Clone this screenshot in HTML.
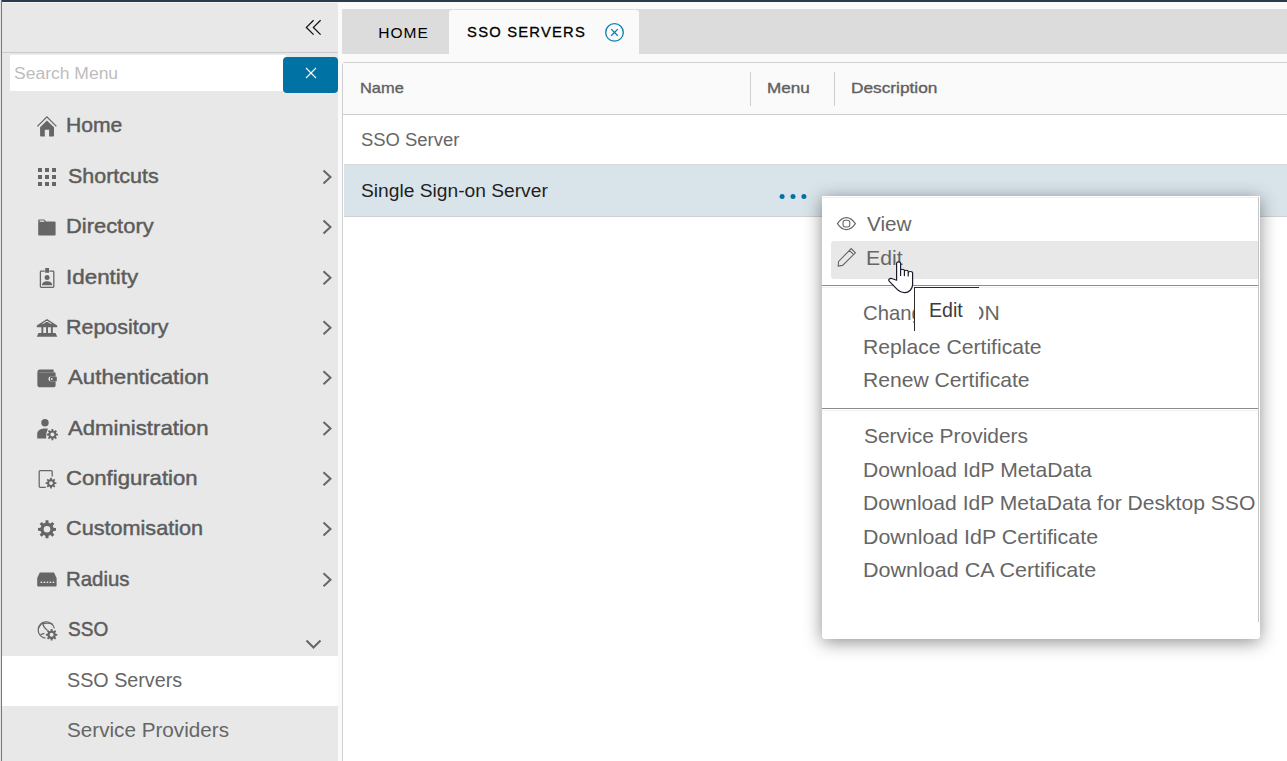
<!DOCTYPE html>
<html><head><meta charset="utf-8">
<style>
html,body{margin:0;padding:0;width:1287px;height:761px;overflow:hidden;background:#fafafa;font-family:"Liberation Sans", sans-serif;}
.a{position:absolute;box-sizing:border-box;}
.t{position:absolute;white-space:nowrap;line-height:20px;transform-origin:0 0;font-family:"Liberation Sans", sans-serif;z-index:5;}
svg{position:absolute;overflow:visible;}
</style></head><body>
<!-- top dark bar -->
<div class="a" style="left:2px;top:0;width:1285px;height:2px;background:#2a3b4b;z-index:9"></div>
<div class="a" style="left:0;top:0;width:1px;height:761px;background:#e3e3e3;z-index:9"></div>
<div class="a" style="left:1px;top:0;width:1px;height:761px;background:#787878;z-index:9"></div>
<!-- sidebar -->
<div class="a" style="left:0;top:0;width:338px;height:761px;background:#e8e8e8"></div>
<div class="a" style="left:1px;top:2px;width:1px;height:759px;background:#787878"></div>
<div class="a" style="left:2px;top:2px;width:336px;height:1px;background:#f4f4f4"></div>
<div class="a" style="left:2px;top:52px;width:336px;height:1px;background:#c9c9c9"></div>
<div class="a" style="left:10px;top:55px;width:276px;height:36px;background:#fff"></div>
<div class="a" style="left:283px;top:57px;width:55px;height:36px;background:#0072a3;border-radius:4px"></div>
<svg style="left:0;top:0" width="1" height="1"><path d="M306 68 L316 78 M316 68 L306 78" stroke="#fff" stroke-width="1.1" fill="none"/></svg>
<!-- collapse double chevron -->
<svg style="left:0;top:0" width="1" height="1"><path d="M313.6 20.2 L306.4 27.4 L313.6 34.6 M320.6 20.2 L313.4 27.4 L320.6 34.6" stroke="#111" stroke-width="1.3" fill="none"/></svg>
<!-- selected sidebar item -->
<div class="a" style="left:2px;top:656px;width:336px;height:50px;background:#fff"></div>
<!-- sidebar chevrons -->
<svg style="left:0;top:0" width="1" height="1"><g stroke="#666" stroke-width="2" fill="none">
<path d="M323.5 170.5 L330.5 177.0 L323.5 183.5"/>
<path d="M323.5 220.4 L330.5 226.9 L323.5 233.4"/>
<path d="M323.5 271.2 L330.5 277.7 L323.5 284.2"/>
<path d="M323.5 321.3 L330.5 327.8 L323.5 334.3"/>
<path d="M323.5 371.2 L330.5 377.7 L323.5 384.2"/>
<path d="M323.5 422.1 L330.5 428.6 L323.5 435.1"/>
<path d="M323.5 472.2 L330.5 478.7 L323.5 485.2"/>
<path d="M323.5 522.5 L330.5 529.0 L323.5 535.5"/>
<path d="M323.5 573.3 L330.5 579.8 L323.5 586.3"/>
<path d="M306.5 640.5 L313.5 647.5 L320.5 640.5"/>
</g></svg>
<!-- sidebar icons -->
<svg style="left:0;top:0" width="1" height="1" fill="#666">
<!-- home -->
<path d="M37.4 126.4 L46.9 116.9 L56.4 126.4" stroke="#666" stroke-width="1.3" fill="none"/>
<path d="M40.1 127.3 L46.9 120.6 L54 127.3 V135.8 a0.8 0.8 0 0 1 -0.8 0.8 H49.1 V129.8 H44.8 V136.6 H40.9 a0.8 0.8 0 0 1 -0.8 -0.8Z"/>
<!-- shortcuts grid -->
<g><rect x="38" y="168" width="4" height="4"/><rect x="45" y="168" width="4" height="4"/><rect x="52" y="168" width="4" height="4"/><rect x="38" y="175" width="4" height="4"/><rect x="45" y="175" width="4" height="4"/><rect x="52" y="175" width="4" height="4"/><rect x="38" y="182" width="4" height="4"/><rect x="45" y="182" width="4" height="4"/><rect x="52" y="182" width="4" height="4"/></g>
<!-- folder -->
<path d="M38.2 220.4 a1 1 0 0 1 1 -1 H44.2 L46.2 221.6 H54.6 a1 1 0 0 1 1 1 V234.6 a1 1 0 0 1 -1 1 H39.2 a1 1 0 0 1 -1 -1Z"/>
<path d="M39.6 221.8 V220.6 H43.8 L44.8 221.8Z" fill="#eee"/>
<!-- identity badge -->
<path d="M44.8 271.2 H41.2 a0.8 0.8 0 0 0 -0.8 0.8 V286.6 a0.8 0.8 0 0 0 0.8 0.8 H53 a0.8 0.8 0 0 0 0.8 -0.8 V272 a0.8 0.8 0 0 0 -0.8 -0.8 H49.4" stroke="#666" stroke-width="1.3" fill="none"/>
<rect x="45.2" y="268" width="3.8" height="4.8"/>
<circle cx="47.1" cy="277.4" r="2.5"/>
<path d="M42 285.2 C42 282.4 44.4 281.3 47.1 281.3 C49.8 281.3 52.2 282.4 52.2 285.2Z"/>
<!-- repository bank -->
<path d="M36.8 325.6 L47 319 L57.2 325.6 V327.2 H36.8Z"/>
<path d="M42.6 323.8 L47 321.2 L51.4 323.8" stroke="#e8e8e8" stroke-width="1" fill="none"/>
<rect x="41.4" y="327" width="1.9" height="6.4"/><rect x="46.1" y="327" width="1.9" height="6.4"/><rect x="50.9" y="327" width="1.9" height="6.4"/>
<path d="M38.4 333 H55.6 L57.2 336.8 H36.8Z"/>
<!-- authentication wallet -->
<path d="M37.6 371.2 a1.8 1.8 0 0 1 1.8 -1.8 H53.6 V372 H39.4 V386.8 a1.8 1.8 0 0 1 -1.8 -1.8Z"/>
<path d="M37.6 372.2 H54.4 a1.2 1.2 0 0 1 1.2 1.2 V376.6 H50.8 a2.4 2.4 0 0 0 0 4.8 H55.6 V385.6 a1.6 1.6 0 0 1 -1.6 1.6 H39.2 a1.6 1.6 0 0 1 -1.6 -1.6Z"/>
<rect x="50" y="376.6" width="6.8" height="4.8" rx="1"/>
<circle cx="51.8" cy="379" r="0.9" fill="#e8e8e8"/>
<!-- administration person + gear -->
<circle cx="45" cy="422.8" r="3.7"/>
<path d="M37.2 438.6 V433.8 C37.2 430.6 40.4 428.4 45 428.4 C46.2 428.4 47.2 428.5 48 428.8 L46.2 433.6 V438.6Z"/>
<g transform="translate(52.4 434.6)"><path d="M-0.99 -3.97 L-0.88 -5.53 L0.88 -5.53 L0.99 -3.97 L2.11 -3.50 L3.29 -4.53 L4.53 -3.29 L3.50 -2.11 L3.97 -0.99 L5.53 -0.88 L5.53 0.88 L3.97 0.99 L3.50 2.11 L4.53 3.29 L3.29 4.53 L2.11 3.50 L0.99 3.97 L0.88 5.53 L-0.88 5.53 L-0.99 3.97 L-2.11 3.50 L-3.29 4.53 L-4.53 3.29 L-3.50 2.11 L-3.97 0.99 L-5.53 0.88 L-5.53 -0.88 L-3.97 -0.99 L-3.50 -2.11 L-4.53 -3.29 L-3.29 -4.53 L-2.11 -3.50Z"/><circle r="2.0" fill="#e8e8e8"/></g>
<!-- configuration doc + gear -->
<path d="M45.8 487.3 H40.2 a1 1 0 0 1 -1 -1 V471.5 a1 1 0 0 1 1 -1 H51.2 a1 1 0 0 1 1 1 V476.4" stroke="#666" stroke-width="1.25" fill="none"/>
<g transform="translate(51.0 483.1)"><path d="M-0.95 -3.83 L-0.84 -5.33 L0.84 -5.33 L0.95 -3.83 L2.03 -3.38 L3.17 -4.37 L4.37 -3.17 L3.38 -2.03 L3.83 -0.95 L5.33 -0.84 L5.33 0.84 L3.83 0.95 L3.38 2.03 L4.37 3.17 L3.17 4.37 L2.03 3.38 L0.95 3.83 L0.84 5.33 L-0.84 5.33 L-0.95 3.83 L-2.03 3.38 L-3.17 4.37 L-4.37 3.17 L-3.38 2.03 L-3.83 0.95 L-5.33 0.84 L-5.33 -0.84 L-3.83 -0.95 L-3.38 -2.03 L-4.37 -3.17 L-3.17 -4.37 L-2.03 -3.38Z"/><circle r="1.9" fill="#e8e8e8"/></g>
<!-- customisation gear -->
<g transform="translate(47.0 529.3)"><path d="M-1.60 -6.45 L-1.42 -8.99 L1.42 -8.99 L1.60 -6.45 L3.43 -5.69 L5.35 -7.36 L7.36 -5.35 L5.69 -3.43 L6.45 -1.60 L8.99 -1.42 L8.99 1.42 L6.45 1.60 L5.69 3.43 L7.36 5.35 L5.35 7.36 L3.43 5.69 L1.60 6.45 L1.42 8.99 L-1.42 8.99 L-1.60 6.45 L-3.43 5.69 L-5.35 7.36 L-7.36 5.35 L-5.69 3.43 L-6.45 1.60 L-8.99 1.42 L-8.99 -1.42 L-6.45 -1.60 L-5.69 -3.43 L-7.36 -5.35 L-5.35 -7.36 L-3.43 -5.69Z"/><circle r="3.3" fill="#e8e8e8"/></g>
<!-- radius device -->
<path d="M39.8 572.6 H54 L56.6 578 V585.6 a1 1 0 0 1 -1 1 H38.2 a1 1 0 0 1 -1 -1 V578Z"/>
<g fill="#e8e8e8"><rect x="40.6" y="581.6" width="1.6" height="1.4"/><rect x="43.6" y="581.6" width="1.6" height="1.4"/><rect x="46.6" y="581.6" width="1.6" height="1.4"/><rect x="49.6" y="581.6" width="1.6" height="1.4"/><rect x="52.6" y="581.6" width="1.6" height="1.4"/></g>
<!-- sso globe + gear -->
<g stroke="#666" stroke-width="1.2" fill="none">
<path d="M54.4 628.4 A8.2 8.2 0 1 0 45.4 638.2"/>
<path d="M42.6 622.4 C42.8 626 45 628.6 47.6 630.6"/>
<path d="M42.6 623.8 C46 623 50 623.2 53 624.4"/>
<path d="M38.6 627.6 L41.8 623"/>
<path d="M40.4 634.6 L44.4 633.4"/>
</g>
<g transform="translate(51.6 634.8)"><path d="M-1.02 -4.11 L-0.91 -5.73 L0.91 -5.73 L1.02 -4.11 L2.18 -3.63 L3.41 -4.69 L4.69 -3.41 L3.63 -2.18 L4.11 -1.02 L5.73 -0.91 L5.73 0.91 L4.11 1.02 L3.63 2.18 L4.69 3.41 L3.41 4.69 L2.18 3.63 L1.02 4.11 L0.91 5.73 L-0.91 5.73 L-1.02 4.11 L-2.18 3.63 L-3.41 4.69 L-4.69 3.41 L-3.63 2.18 L-4.11 1.02 L-5.73 0.91 L-5.73 -0.91 L-4.11 -1.02 L-3.63 -2.18 L-4.69 -3.41 L-3.41 -4.69 L-2.18 -3.63Z"/><circle r="2.0" fill="#e8e8e8"/></g>
</svg>

<!-- main: tabs -->
<div class="a" style="left:338px;top:2px;width:949px;height:759px;background:#fafafa"></div>
<div class="a" style="left:342px;top:9px;width:945px;height:45px;background:#dcdcdc"></div>
<div class="a" style="left:449px;top:10px;width:190px;height:44px;background:#fafafa;border-radius:3px 3px 0 0"></div>
<svg style="left:0;top:0" width="1" height="1"><g stroke="#0f7bb0" fill="none"><circle cx="614.5" cy="32.4" r="8.8" stroke-width="1.3"/><path d="M611.2 29.1 L617.8 35.7 M617.8 29.1 L611.2 35.7" stroke-width="1.3"/></g></svg>

<!-- card -->
<div class="a" style="left:342px;top:62px;width:960px;height:720px;border:1px solid #cfcfcf;border-radius:3px;background:#fff"></div>
<div class="a" style="left:343px;top:63px;width:944px;height:51px;background:#fafafa"></div>
<div class="a" style="left:343px;top:114px;width:944px;height:1px;background:#cccccc"></div>
<div class="a" style="left:750px;top:72px;width:1px;height:34px;background:#cfcfcf"></div>
<div class="a" style="left:834px;top:72px;width:1px;height:34px;background:#cfcfcf"></div>
<div class="a" style="left:344px;top:164px;width:943px;height:1px;background:#d7d7d7"></div>
<div class="a" style="left:344px;top:165px;width:943px;height:51px;background:#d9e4ea"></div>
<div class="a" style="left:344px;top:216px;width:943px;height:1px;background:#cfcfcf"></div>
<svg style="left:0;top:0" width="1" height="1" fill="#0072a3"><circle cx="782.1" cy="196.6" r="2.5"/><circle cx="793" cy="196.6" r="2.5"/><circle cx="803.9" cy="196.6" r="2.5"/></svg>

<!-- popup -->
<div class="a" style="left:822px;top:196px;width:438px;height:443px;background:#fff;border-radius:0 0 3px 3px;box-shadow:0 3px 18px rgba(0,0,0,0.45);z-index:2"></div>
<div class="a" style="left:822px;top:197px;width:436px;height:1px;background:#efefef;z-index:2"></div>
<div class="a" style="left:1258px;top:197px;width:1px;height:425px;background:#c4c4c4;z-index:2"></div>
<div class="a" style="left:831px;top:241px;width:427px;height:38px;background:#e8e8e8;border-radius:3px 0 0 3px;z-index:2"></div>
<div class="a" style="left:822px;top:285px;width:436px;height:1px;background:#8c8c8c;z-index:2"></div>
<div class="a" style="left:822px;top:287px;width:436px;height:1px;background:#f0f0f0;z-index:2"></div>
<div class="a" style="left:822px;top:408px;width:436px;height:1px;background:#8c8c8c;z-index:2"></div>
<div class="a" style="left:822px;top:410px;width:436px;height:1px;background:#f0f0f0;z-index:2"></div>
<svg style="left:0;top:0;z-index:3" width="1" height="1"><g stroke="#666" stroke-width="1.1" fill="none">
<path d="M837.4 223.6 C841 218.4 844 217.6 846.4 217.6 C848.8 217.6 851.8 218.4 855.4 223.6 C851.8 228.8 848.8 229.6 846.4 229.6 C844 229.6 841 228.8 837.4 223.6Z"/>
<rect x="843" y="220.2" width="6.8" height="6.8" rx="2.4"/>
<path d="M838.2 266 L838.6 261.4 L851.2 248.6 L855.4 252.8 L842.6 265.4Z M849.4 250.4 L853.6 254.6"/>
</g></svg>

<div class="t" style="left:378.20px;top:23.00px;font-size:15.5px;font-weight:400;color:#000;letter-spacing:1.013px;">HOME</div>
<div class="t" style="left:467.10px;top:21.90px;font-size:14.75px;font-weight:400;color:#000;letter-spacing:1.216px;-webkit-text-stroke:0.3px #000;">SSO SERVERS</div>
<div class="t" style="left:13.90px;top:62.80px;font-size:17.25px;font-weight:400;color:#bdbdbd;transform:scaleX(1.0147);">Search Menu</div>
<div class="t" style="left:360.31px;top:78.00px;font-size:15.0px;font-weight:400;color:#606060;transform:scaleX(1.0939);-webkit-text-stroke:0.35px #606060;">Name</div>
<div class="t" style="left:767.26px;top:78.00px;font-size:15.0px;font-weight:400;color:#606060;transform:scaleX(1.1415);-webkit-text-stroke:0.35px #606060;">Menu</div>
<div class="t" style="left:851.25px;top:78.00px;font-size:15.0px;font-weight:400;color:#606060;transform:scaleX(1.1508);-webkit-text-stroke:0.35px #606060;">Description</div>
<div class="t" style="left:361.10px;top:130.00px;font-size:18.25px;font-weight:400;color:#666;transform:scaleX(1.0104);">SSO Server</div>
<div class="t" style="left:361.00px;top:180.50px;font-size:18.25px;font-weight:400;color:#1f1f1f;transform:scaleX(1.0521);">Single Sign-on Server</div>
<div class="t" style="left:867.00px;top:213.90px;font-size:20.25px;font-weight:400;color:#666;transform:scaleX(1.0227);">View</div>
<div class="t" style="left:865.55px;top:248.00px;font-size:20.25px;font-weight:400;color:#666;transform:scaleX(1.0476);">Edit</div>
<div class="t" style="left:863.00px;top:303.20px;font-size:20.25px;font-weight:400;color:#666;transform:scaleX(1.0011);">Change</div>
<div class="t" style="left:967.58px;top:303.20px;font-size:20.25px;font-weight:400;color:#666;transform:scaleX(1.0441);">ON</div>
<div class="t" style="left:863.26px;top:336.90px;font-size:20.25px;font-weight:400;color:#666;transform:scaleX(1.0441);">Replace Certificate</div>
<div class="t" style="left:863.26px;top:369.90px;font-size:20.25px;font-weight:400;color:#666;transform:scaleX(1.0419);">Renew Certificate</div>
<div class="t" style="left:863.60px;top:426.00px;font-size:20.25px;font-weight:400;color:#666;transform:scaleX(1.0337);">Service Providers</div>
<div class="t" style="left:863.46px;top:459.70px;font-size:20.25px;font-weight:400;color:#666;transform:scaleX(1.0441);">Download IdP MetaData</div>
<div class="t" style="left:863.46px;top:493.00px;font-size:20.25px;font-weight:400;color:#666;transform:scaleX(1.0415);">Download IdP MetaData for Desktop SSO</div>
<div class="t" style="left:863.44px;top:526.80px;font-size:20.25px;font-weight:400;color:#666;transform:scaleX(1.0564);">Download IdP Certificate</div>
<div class="t" style="left:863.44px;top:559.90px;font-size:20.25px;font-weight:400;color:#666;transform:scaleX(1.0628);">Download CA Certificate</div>
<div class="t" style="left:66.46px;top:115.00px;font-size:20.25px;font-weight:400;color:#5c5c5c;transform:scaleX(1.0426);-webkit-text-stroke:0.45px #5c5c5c;">Home</div>
<div class="t" style="left:67.50px;top:165.60px;font-size:20.25px;font-weight:400;color:#5c5c5c;transform:scaleX(1.0607);-webkit-text-stroke:0.45px #5c5c5c;">Shortcuts</div>
<div class="t" style="left:66.42px;top:216.00px;font-size:20.25px;font-weight:400;color:#5c5c5c;transform:scaleX(1.0818);-webkit-text-stroke:0.45px #5c5c5c;">Directory</div>
<div class="t" style="left:66.39px;top:267.00px;font-size:20.25px;font-weight:400;color:#5c5c5c;transform:scaleX(1.1064);-webkit-text-stroke:0.45px #5c5c5c;">Identity</div>
<div class="t" style="left:66.44px;top:317.00px;font-size:20.25px;font-weight:400;color:#5c5c5c;transform:scaleX(1.0583);-webkit-text-stroke:0.45px #5c5c5c;">Repository</div>
<div class="t" style="left:67.50px;top:367.00px;font-size:20.25px;font-weight:400;color:#5c5c5c;transform:scaleX(1.0985);-webkit-text-stroke:0.45px #5c5c5c;">Authentication</div>
<div class="t" style="left:67.50px;top:418.00px;font-size:20.25px;font-weight:400;color:#5c5c5c;transform:scaleX(1.0949);-webkit-text-stroke:0.45px #5c5c5c;">Administration</div>
<div class="t" style="left:66.41px;top:467.80px;font-size:20.25px;font-weight:400;color:#5c5c5c;transform:scaleX(1.0923);-webkit-text-stroke:0.45px #5c5c5c;">Configuration</div>
<div class="t" style="left:66.43px;top:517.60px;font-size:20.25px;font-weight:400;color:#5c5c5c;transform:scaleX(1.0687);-webkit-text-stroke:0.45px #5c5c5c;">Customisation</div>
<div class="t" style="left:66.49px;top:568.70px;font-size:20.25px;font-weight:400;color:#5c5c5c;transform:scaleX(1.0079);-webkit-text-stroke:0.45px #5c5c5c;">Radius</div>
<div class="t" style="left:67.50px;top:619.00px;font-size:20.25px;font-weight:400;color:#5c5c5c;transform:scaleX(0.9402);-webkit-text-stroke:0.45px #5c5c5c;">SSO</div>
<div class="t" style="left:67.30px;top:670.00px;font-size:20.25px;font-weight:400;color:#666;transform:scaleX(0.9743);">SSO Servers</div>
<div class="t" style="left:67.30px;top:720.00px;font-size:20.25px;font-weight:400;color:#666;transform:scaleX(1.0211);">Service Providers</div>

<!-- tooltip -->
<div class="a" style="left:914px;top:287px;width:100px;height:60px;background:#fff;border-top:1px solid #2b2b2b;border-left:1px solid #2b2b2b;z-index:6;clip-path:polygon(0 0,65px 0,65px 44px,0 44px)"></div>
<div style="position:absolute;left:0;top:0;z-index:7"><div class="t" style="left:928.75px;top:299.50px;font-size:20.75px;font-weight:400;color:#3c3c3c;transform:scaleX(0.9460);">Edit</div></div>

<!-- cursor -->
<svg style="left:0;top:0;z-index:10" width="1" height="1">
<path d="M896.6 280.2 V263.6 C896.6 261.4 900.6 261.4 900.6 263.6 V275.4 V270.6 C900.6 268.8 904.4 268.8 904.4 270.6 V275.6 V271.6 C904.4 269.8 908.2 269.8 908.2 271.6 V276 V273 C908.2 271 912.6 271 912.6 273 V284.6 C912.6 289 909 292.6 904.6 292.6 C900.4 292.6 898.6 291 896.2 288.4 L889.4 281.4 C887.6 279.6 889.8 277.8 892.4 278.8Z" fill="#fff" stroke="#1a1a2a" stroke-width="1.2" stroke-linejoin="round"/>
</svg>
</body></html>
